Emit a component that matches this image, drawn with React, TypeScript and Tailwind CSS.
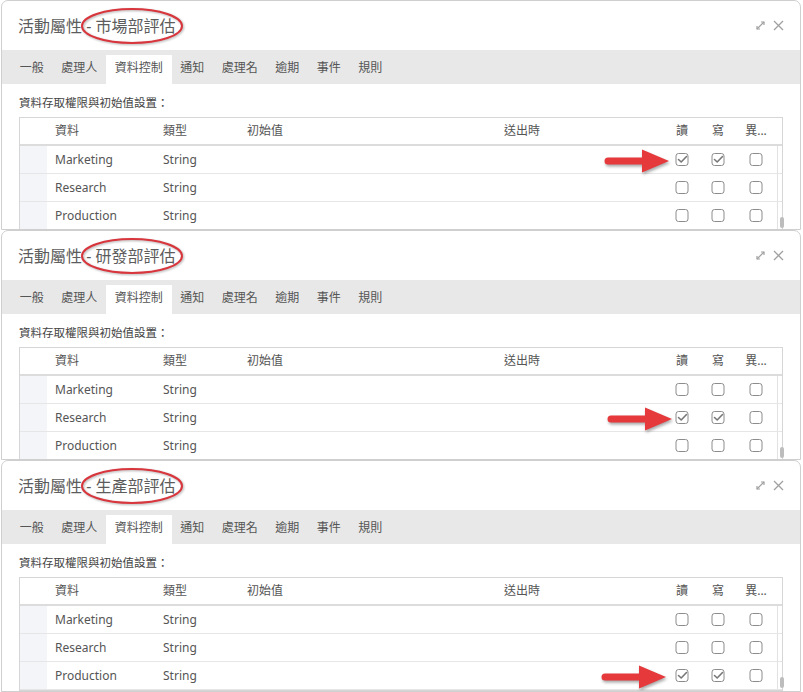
import React from 'react';

type Row = { name: string; type: string };

const rows: Row[] = [
  { name: 'Marketing', type: 'String' },
  { name: 'Research', type: 'String' },
  { name: 'Production', type: 'String' },
];

const tabs = ['一般', '處理人', '資料控制', '通知', '處理名', '逾期', '事件', '規則'];

const grid = 'grid grid-cols-[27px_108px_84px_200px_166px_58px_38px_34px_42px_1fr]';

const CheckBox: React.FC<{ checked?: boolean }> = ({ checked }) => (
  <svg width="15" height="15" viewBox="0 0 15 15">
    <rect x="1" y="1.5" width="12" height="12" rx="2.5" fill="white" stroke="#8c8c8c" strokeWidth="1" />
    {checked && <path d="M3.5 7.5 L6.2 10 L11.5 4.5" fill="none" stroke="#777" strokeWidth="1.6" strokeLinecap="round" strokeLinejoin="round" />}
  </svg>
);

const RedArrow: React.FC<{ top: number; left: number }> = ({ top, left }) => (
  <svg
    className="absolute drop-shadow-[1px_2px_1.5px_rgba(0,0,0,0.35)]"
    style={{ top: top - 13, left }}
    width="68"
    height="26"
    viewBox="0 0 68 26"
  >
    <path d="M4 9.5 H38 V1.5 L65 13 L38 24.5 V16.5 H4 a3.5 3.5 0 0 1 0 -7 Z" fill="#e5393c" />
  </svg>
);

const Panel: React.FC<{ dept: string; checkedRow: number; arrowLeft: number; last?: boolean }> = ({ dept, checkedRow, arrowLeft, last }) => (
  <div className={`relative ml-[1px] w-[800px] overflow-hidden rounded-t-[7px] border border-[#cfcfcf] bg-white ${last ? 'h-[232px]' : 'h-[230px]'}`}>
    {/* title */}
    <div className="flex h-[49px] items-center justify-between pl-[16px] pr-[16px]">
      <h1 className="text-[16px] font-normal text-[#5c5c5c]">活動屬性 - {dept}</h1>
      <div className="flex items-center gap-[7px] text-[#a0a0a0]">
        <svg width="11" height="11" viewBox="0 0 11 11" fill="none" stroke="currentColor" strokeWidth="1.2">
          <path d="M2 9 L9 2" />
          <path d="M6 2 H9 V5" />
          <path d="M2 6 V9 H5" />
        </svg>
        <svg width="11" height="11" viewBox="0 0 11 11" fill="none" stroke="currentColor" strokeWidth="1.3">
          <path d="M1 1 L10 10 M10 1 L1 10" />
        </svg>
      </div>
    </div>

    {/* tabs */}
    <div className="flex h-[34px] items-end bg-[#e8e8e8] pl-[9px]">
      {tabs.map((t, i) => (
        <div
          key={t}
          className={`flex h-[29px] items-center px-[8.75px] pb-[3px] text-[12px] text-[#555] ${i === 2 ? 'bg-white' : ''}`}
        >
          {t}
        </div>
      ))}
    </div>

    {/* body */}
    <div className="px-[17px]">
      <div className="pb-[6px] pt-[11px] text-[11.5px] leading-[16px] text-[#444]">資料存取權限與初始值設置：</div>
      <div className="border border-[#d6d6d6] text-[12px] text-[#555]">
        <div className={`${grid} h-[28px] items-center border-b-2 border-[#dcdcdc]`}>
          <div />
          <div className="pl-[8px]">資料</div>
          <div className="pl-[8px]">類型</div>
          <div className="pl-[8px]">初始值</div>
          <div className="text-center">送出時</div>
          <div />
          <div className="text-center">讀</div>
          <div className="text-center">寫</div>
          <div className="text-center">異...</div>
          <div />
        </div>
        {rows.map((r, i) => (
          <div key={r.name} className={`${grid} h-[28px] items-center border-b border-[#e6e6e6]`}>
            <div className="h-full bg-[#f3f5f8]" />
            <div className="pl-[8px]">{r.name}</div>
            <div className="pl-[8px]">{r.type}</div>
            <div />
            <div />
            <div />
            <div className="flex justify-center">
              <CheckBox checked={i === checkedRow} />
            </div>
            <div className="flex justify-center">
              <CheckBox checked={i === checkedRow} />
            </div>
            <div className="flex justify-center">
              <CheckBox />
            </div>
            <div className="relative h-full border-l border-[#e2e2e2]">
              {i === 2 && <div className="absolute bottom-[1px] left-[2px] h-[11px] w-[4px] rounded-[2px] bg-[#bdbdbd]" />}
            </div>
          </div>
        ))}
      </div>
    </div>

    {/* annotations */}
    <svg className="absolute left-[76px] top-[5px] drop-shadow-[1px_1.5px_1px_rgba(0,0,0,0.3)]" width="110" height="42" viewBox="0 0 110 42">
      <ellipse cx="54" cy="20" rx="50" ry="17" fill="none" stroke="#d8353c" strokeWidth="2" />
    </svg>
    <RedArrow top={160 + checkedRow * 28} left={arrowLeft} />
  </div>
);

export default function App() {
  return (
    <div className="h-[692px] w-[803px] overflow-hidden bg-white font-['Noto_Sans','Noto_Sans_CJK_TC',sans-serif]">
      <Panel dept="市場部評估" checkedRow={0} arrowLeft={602} />
      <Panel dept="研發部評估" checkedRow={1} arrowLeft={605} />
      <Panel dept="生產部評估" checkedRow={2} arrowLeft={599} last />
    </div>
  );
}
